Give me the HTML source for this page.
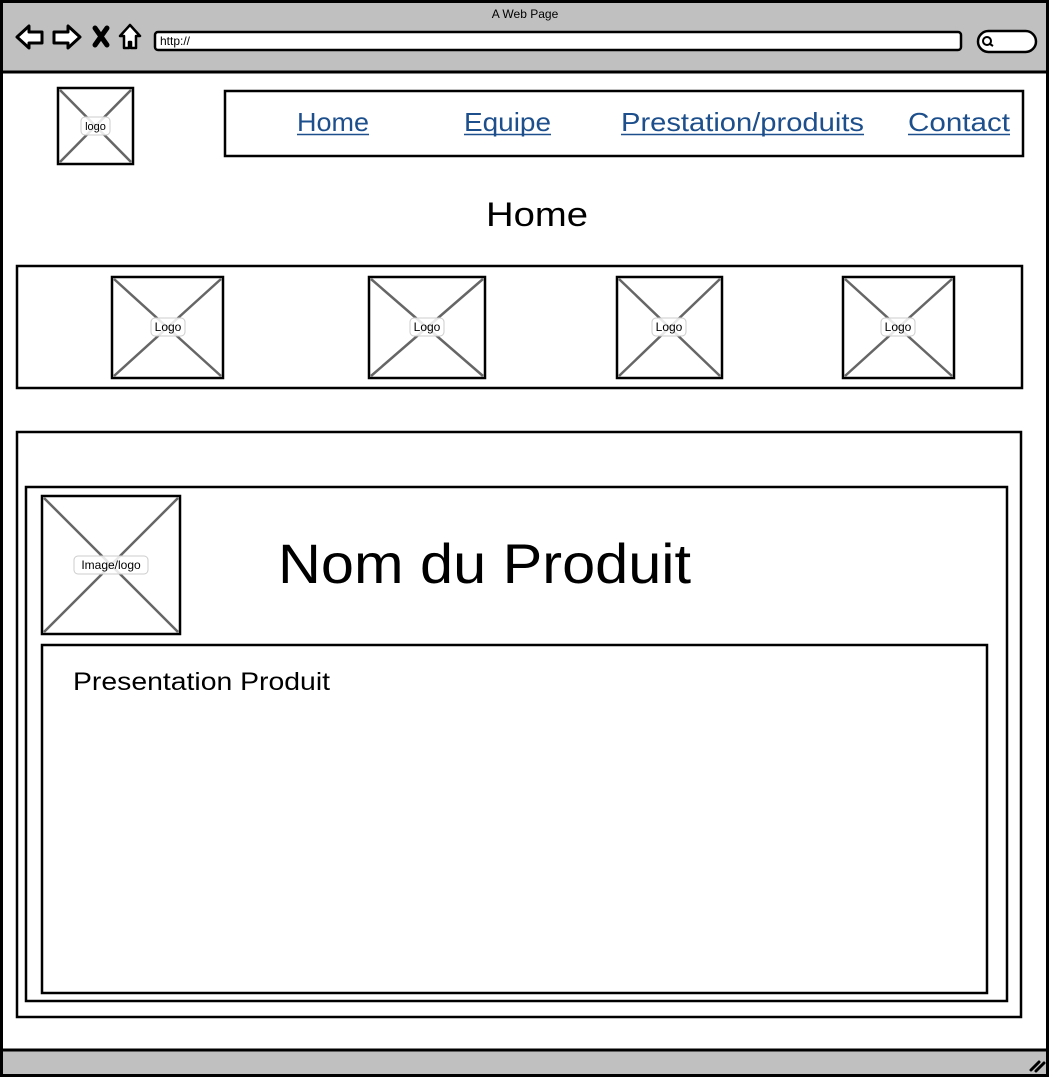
<!DOCTYPE html>
<html><head><meta charset="utf-8"><style>
html,body{margin:0;padding:0;background:#fff;}
svg{display:block;font-family:"Liberation Sans",sans-serif;}
</style></head><body>
<svg width="1050" height="1078" viewBox="0 0 1050 1078" xmlns="http://www.w3.org/2000/svg">
<defs>
<g id="x"></g>
</defs>
<rect x="0" y="0" width="1050" height="1078" fill="#fff"/>
<!-- top bar -->
<rect x="2" y="2" width="1045" height="70" fill="#c0c0c0"/>
<line x1="2" y1="72" x2="1047" y2="72" stroke="#000" stroke-width="3"/>
<text x="525" y="18" font-size="12" text-anchor="middle">A Web Page</text>
<!-- nav icons -->
<path d="M17 37 L29 26 L29 32 L42 32 L42 43 L29 43 L29 48 Z" fill="#fff" stroke="#000" stroke-width="3" stroke-linejoin="round"/>
<path d="M80 37 L68 26 L68 32 L54 32 L54 43 L68 43 L68 48 Z" fill="#fff" stroke="#000" stroke-width="3" stroke-linejoin="round"/>
<path d="M95 28 L107 45 M107 28 L95 45" stroke="#000" stroke-width="5" stroke-linecap="round"/>
<path d="M130 25 L140 36 L136 36 L136 48 L131 48 L131 42 L129 42 L129 48 L124 48 L124 36 L120 36 Z" fill="#fff" stroke="#000" stroke-width="2.5" stroke-linejoin="round"/>
<!-- url bar -->
<rect x="155" y="32" width="806" height="18" rx="3" fill="#fff" stroke="#000" stroke-width="2.5"/>
<text x="160" y="45" font-size="12">http://</text>
<!-- search -->
<rect x="978" y="31" width="58" height="21" rx="10.5" fill="#fff" stroke="#000" stroke-width="2.5"/>
<circle cx="987" cy="41" r="4" fill="none" stroke="#000" stroke-width="2"/>
<line x1="990" y1="44" x2="993" y2="46" stroke="#000" stroke-width="2"/>
<!-- bottom bar -->
<rect x="2" y="1050" width="1045" height="26" fill="#c0c0c0"/>
<line x1="2" y1="1050" x2="1047" y2="1050" stroke="#000" stroke-width="3"/>
<path d="M1031 1070 L1039 1062 M1036 1071 L1044 1063" stroke="#000" stroke-width="3" stroke-linecap="round"/>
<!-- outer frame -->
<rect x="1.5" y="1.5" width="1046" height="1074" fill="none" stroke="#000" stroke-width="3"/>

<!-- logo -->
<rect x="58" y="88" width="75" height="76" fill="#fff" stroke="#000" stroke-width="2.5"/>
<path d="M60 90 L131 162 M131 90 L60 162" stroke="#666" stroke-width="2.5"/>
<rect x="81" y="117" width="29" height="18" rx="4" fill="#fff" stroke="#ccc" fill-opacity="0.85"/>
<text x="95.5" y="130" font-size="11" text-anchor="middle">logo</text>

<!-- nav -->
<rect x="225" y="91" width="798" height="65" fill="#fff" stroke="#000" stroke-width="2.5"/>
<g fill="#1d4f8c" font-size="26">
<text x="297" y="131" textLength="72" lengthAdjust="spacingAndGlyphs">Home</text>
<text x="464" y="131" textLength="87" lengthAdjust="spacingAndGlyphs">Equipe</text>
<text x="621" y="131" textLength="243" lengthAdjust="spacingAndGlyphs">Prestation/produits</text>
<text x="908" y="131" textLength="102" lengthAdjust="spacingAndGlyphs">Contact</text>
</g>
<g stroke="#1d4f8c" stroke-width="1.5">
<line x1="297" y1="134.5" x2="369" y2="134.5"/>
<line x1="464" y1="134.5" x2="551" y2="134.5"/>
<line x1="621" y1="134.5" x2="864" y2="134.5"/>
<line x1="908" y1="134.5" x2="1010" y2="134.5"/>
</g>

<text x="537" y="226" font-size="34" text-anchor="middle" textLength="102" lengthAdjust="spacingAndGlyphs">Home</text>

<!-- carousel -->
<rect x="17" y="266" width="1005" height="122" fill="#fff" stroke="#000" stroke-width="2.5"/>
<g>
<rect x="112" y="277" width="111" height="101" fill="#fff" stroke="#000" stroke-width="2.5"/>
<path d="M114 279 L221 376 M221 279 L114 376" stroke="#666" stroke-width="2.5"/>
<rect x="151" y="318" width="34" height="18" rx="4" fill="#fff" stroke="#ccc" fill-opacity="0.85"/>
<text x="168" y="331" font-size="12" text-anchor="middle">Logo</text>
</g>
<g>
<rect x="369" y="277" width="116" height="101" fill="#fff" stroke="#000" stroke-width="2.5"/>
<path d="M371 279 L483 376 M483 279 L371 376" stroke="#666" stroke-width="2.5"/>
<rect x="410" y="318" width="34" height="18" rx="4" fill="#fff" stroke="#ccc" fill-opacity="0.85"/>
<text x="427" y="331" font-size="12" text-anchor="middle">Logo</text>
</g>
<g>
<rect x="617" y="277" width="105" height="101" fill="#fff" stroke="#000" stroke-width="2.5"/>
<path d="M619 279 L720 376 M720 279 L619 376" stroke="#666" stroke-width="2.5"/>
<rect x="652" y="318" width="34" height="18" rx="4" fill="#fff" stroke="#ccc" fill-opacity="0.85"/>
<text x="669" y="331" font-size="12" text-anchor="middle">Logo</text>
</g>
<g>
<rect x="843" y="277" width="111" height="101" fill="#fff" stroke="#000" stroke-width="2.5"/>
<path d="M845 279 L952 376 M952 279 L845 376" stroke="#666" stroke-width="2.5"/>
<rect x="881" y="318" width="34" height="18" rx="4" fill="#fff" stroke="#ccc" fill-opacity="0.85"/>
<text x="898" y="331" font-size="12" text-anchor="middle">Logo</text>
</g>

<!-- product -->
<rect x="17" y="432" width="1004" height="585" fill="#fff" stroke="#000" stroke-width="2.5"/>
<rect x="26" y="487" width="981" height="514" fill="#fff" stroke="#000" stroke-width="2.5"/>
<rect x="42" y="496" width="138" height="138" fill="#fff" stroke="#000" stroke-width="2.5"/>
<path d="M44 498 L178 632 M178 498 L44 632" stroke="#666" stroke-width="2.5"/>
<rect x="74" y="556" width="74" height="18" rx="4" fill="#fff" stroke="#ccc" fill-opacity="0.85"/>
<text x="111" y="569" font-size="12" text-anchor="middle">Image/logo</text>
<text x="278" y="583" font-size="56" textLength="413" lengthAdjust="spacingAndGlyphs">Nom du Produit</text>
<rect x="42" y="645" width="945" height="348" fill="#fff" stroke="#000" stroke-width="2.5"/>
<text x="73" y="690" font-size="25" textLength="257" lengthAdjust="spacingAndGlyphs">Presentation Produit</text>
</svg>
</body></html>
